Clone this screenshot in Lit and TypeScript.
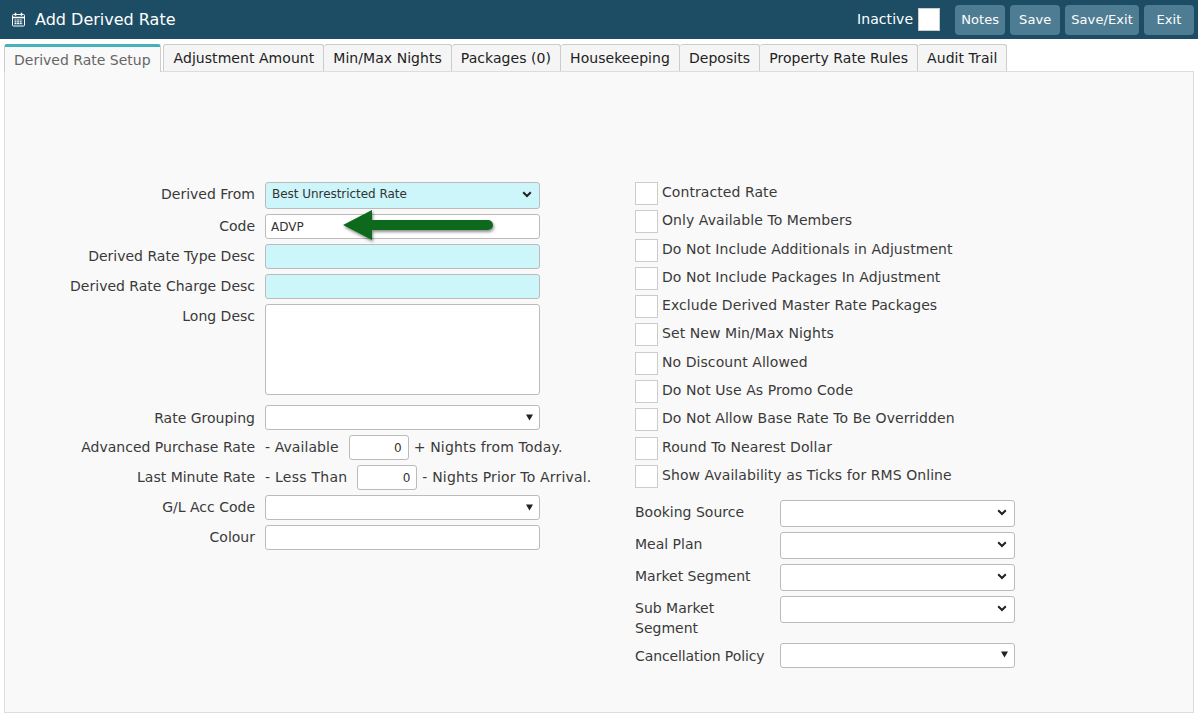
import { LitElement, html, css, nothing } from "lit";
import { customElement } from "lit/decorators.js";

const chevron = html`<svg class="chev" width="10" height="7" viewBox="0 0 10 7"><path d="M1.2 1.2 5 5 8.8 1.2" fill="none" stroke="#222" stroke-width="2"/></svg>`;
const tri = html`<svg class="tri" width="7" height="7" viewBox="0 0 7 7"><path d="M0 .5h7L3.5 6.5z" fill="#222"/></svg>`;

const tabs = ["Adjustment Amount", "Min/Max Nights", "Packages (0)", "Housekeeping", "Deposits", "Property Rate Rules", "Audit Trail"];
const checks = ["Contracted Rate", "Only Available To Members", "Do Not Include Additionals in Adjustment", "Do Not Include Packages In Adjustment", "Exclude Derived Master Rate Packages", "Set New Min/Max Nights", "No Discount Allowed", "Do Not Use As Promo Code", "Do Not Allow Base Rate To Be Overridden", "Round To Nearest Dollar", "Show Availability as Ticks for RMS Online"];

@customElement("app-root")
export class AppRoot extends LitElement {
  static styles = css`
    :host { display: block; width: 1198px; height: 715px; overflow: hidden; background: #fff; font-family: "DejaVu Sans", Verdana, sans-serif; font-size: 14px; color: #3a3a3a; }
    * { box-sizing: border-box; }
    .bar { height: 39px; background: #1c4d65; display: flex; align-items: center; padding: 0 4px 0 11px; color: #fff; }
    .bar svg { margin-right: 9px; }
    .title { font-size: 16px; flex: 1; }
    .inactive { font-size: 14px; margin-right: 5px; padding-bottom: 2px; letter-spacing: 0.07px; }
    .box { width: 23px; height: 23px; background: #fff; border: 1px solid #ccc; flex: none; }
    .bar .box { width: 22px; margin-right: 15px; }
    .btn { height: 30px; padding: 0 6px; min-width: 50px; margin-left: 5px; background: #4e7c93; border: 0; border-radius: 4px; color: #fff; font: 13px "DejaVu Sans", Verdana, sans-serif; letter-spacing: 0.1px; }
    .bar .box + .btn { margin-left: 0; }
    .tabs { display: flex; padding: 5px 0 0 4px; height: 33px; position: relative; z-index: 1; }
    .tab { height: 27px; padding: 0 9px; border: 1px solid #ccc; border-bottom: 0; border-left-width: 0; border-radius: 3px 3px 0 0; background: #f5f5f5; color: #222; display: flex; align-items: center; white-space: nowrap; letter-spacing: 0.05px; }
    .tab.first { border-left-width: 1px; padding-left: 10px; }
    .tab.active { height: 28px; margin-right: 2px; padding: 1px 9px 0; border-top: 3px solid #45b1bb; border-left-width: 1px; background: #f9f9f9; color: #666; letter-spacing: 0; }
    .panel { margin: -1px 4px 0; height: 642px; background: #f9f9f9; border: 1px solid #ddd; padding: 110px 0 0 0; display: flex; }
    .left { width: 535px; margin-right: 95px; display: flex; flex-direction: column; gap: 5px; flex: none; }
    .row { display: grid; grid-template-columns: 250px 275px; column-gap: 10px; align-items: center; height: 25px; }
    .row > label { text-align: right; white-space: nowrap; padding-bottom: 2px; }
    .row.tall { height: 27px; }
    .row.tall > label { padding-bottom: 4px; }
    .row.tall select { padding-bottom: 4px; padding-left: 6px; letter-spacing: -0.04px; }
    .row.tall .chev { margin-top: -5px; }
    .row.area { height: 91px; align-items: start; margin-bottom: 5px; }
    .row.area > label { padding: 4px 0 0; }
    .row > label.plain { padding-bottom: 0; }
    input, select, textarea { display: block; width: 100%; height: 100%; border: 1px solid #bbb; border-radius: 3px; background: #fff; font: 12px "DejaVu Sans", Verdana, sans-serif; color: #333; padding: 0 5px; margin: 0; outline: 0; resize: none; appearance: none; }
    .req { background: #cdf6fb; }
    .wrap { position: relative; height: 100%; min-width: 0; }
    .chev { position: absolute; right: 8px; top: 50%; margin-top: -4px; pointer-events: none; }
    .tri { position: absolute; right: 7px; top: 50%; margin-top: -4px; pointer-events: none; }
    .arrow { position: absolute; left: 72px; top: -9px; pointer-events: none; overflow: visible; }
    .inline { display: flex; align-items: center; white-space: nowrap; width: 340px; }
    .inline span { padding-bottom: 2px; letter-spacing: 0.17px; }
    .inline span.lead { letter-spacing: 0.07px; }
    .inline span.wide { letter-spacing: 0.25px; }
    .num { width: 60px; height: 25px; text-align: right; margin: 0 5px 0 10px; flex: none; padding-right: 6px; }
    .right { width: 380px; flex: none; }
    .checks { display: flex; flex-direction: column; gap: 5.3px; margin-bottom: 12px; }
    .check { display: flex; align-items: center; height: 23px; gap: 4px; white-space: nowrap; letter-spacing: 0.07px; }
    .check span { margin-top: -3px; }
    .selects { display: flex; flex-direction: column; gap: 5px; }
    .srow { display: grid; grid-template-columns: 145px 235px; line-height: 20px; }
    .srow label { padding-top: 2px; }
    .srow label.low { padding-top: 3px; letter-spacing: -0.1px; }
    .srow .wrap { height: 27px; }
    .srow .wrap.short { height: 25px; }
    .srow.two { height: 42px; }
  `;

  private sel(cls = "", icon = chevron, val = "") {
    return html`<div class="wrap"><select class=${cls}>${val ? html`<option>${val}</option>` : nothing}</select>${icon}</div>`;
  }

  render() {
    return html`
      <div class="bar">
        <svg width="15" height="15" viewBox="0 0 15 15" fill="none" stroke="#fff"><rect x="1.500" y="2.500" width="12" height="11.500" rx="1"/><path d="M1.500 5.500h12" stroke-width="1.600"/><path d="M4.500 .8v3M10.500 .8v3" stroke-width="1.500"/><path d="M3.500 8h8M3.500 9.800h8M3.500 11.600h8" stroke-width="1.200" stroke-dasharray="2 .6"/></svg>
        <div class="title">Add Derived Rate</div>
        <div class="inactive">Inactive</div>
        <div class="box"></div>
        ${["Notes", "Save", "Save/Exit", "Exit"].map((b) => html`<button class="btn">${b}</button>`)}
      </div>
      <div class="tabs">
        <div class="tab active">Derived Rate Setup</div>
        ${tabs.map((t, i) => html`<div class="tab ${i === 0 ? "first" : ""}">${t}</div>`)}
      </div>
      <div class="panel">
        <div class="left">
          <div class="row tall"><label>Derived From</label>${this.sel("req", chevron, "Best Unrestricted Rate")}</div>
          <div class="row"><label>Code</label><div class="wrap"><input value="ADVP" />
            <svg class="arrow" width="160" height="40" viewBox="0 0 160 40"><defs><filter id="s" x="-10%" y="-30%" width="120%" height="170%"><feDropShadow dx="1" dy="2" stdDeviation="1.600" flood-color="#000" flood-opacity=".45"/></filter></defs><path d="M6 20 35 5v10h116a5 5 0 0 1 0 10H35v10z" fill="#0f6a1b" filter="url(#s)"/></svg></div></div>
          <div class="row"><label>Derived Rate Type Desc</label><input class="req" /></div>
          <div class="row"><label>Derived Rate Charge Desc</label><input class="req" /></div>
          <div class="row area"><label>Long Desc</label><textarea></textarea></div>
          <div class="row"><label class="plain">Rate Grouping</label>${this.sel("", tri)}</div>
          <div class="row"><label>Advanced Purchase Rate</label><div class="inline"><span class="lead">- Available</span><input class="num" value="0" /><span>+ Nights from Today.</span></div></div>
          <div class="row"><label>Last Minute Rate</label><div class="inline"><span class="wide">- Less Than</span><input class="num" value="0" /><span>- Nights Prior To Arrival.</span></div></div>
          <div class="row"><label>G/L Acc Code</label>${this.sel("", tri)}</div>
          <div class="row"><label>Colour</label><input /></div>
        </div>
        <div class="right">
          <div class="checks">${checks.map((c) => html`<div class="check"><div class="box"></div><span>${c}</span></div>`)}</div>
          <div class="selects">
            <div class="srow"><label>Booking Source</label>${this.sel()}</div>
            <div class="srow"><label>Meal Plan</label>${this.sel()}</div>
            <div class="srow"><label>Market Segment</label>${this.sel()}</div>
            <div class="srow two"><label>Sub Market<br />Segment</label>${this.sel()}</div>
            <div class="srow"><label class="low">Cancellation Policy</label><div class="wrap short"><select></select>${tri}</div></div>
          </div>
        </div>
      </div>
    `;
  }
}
